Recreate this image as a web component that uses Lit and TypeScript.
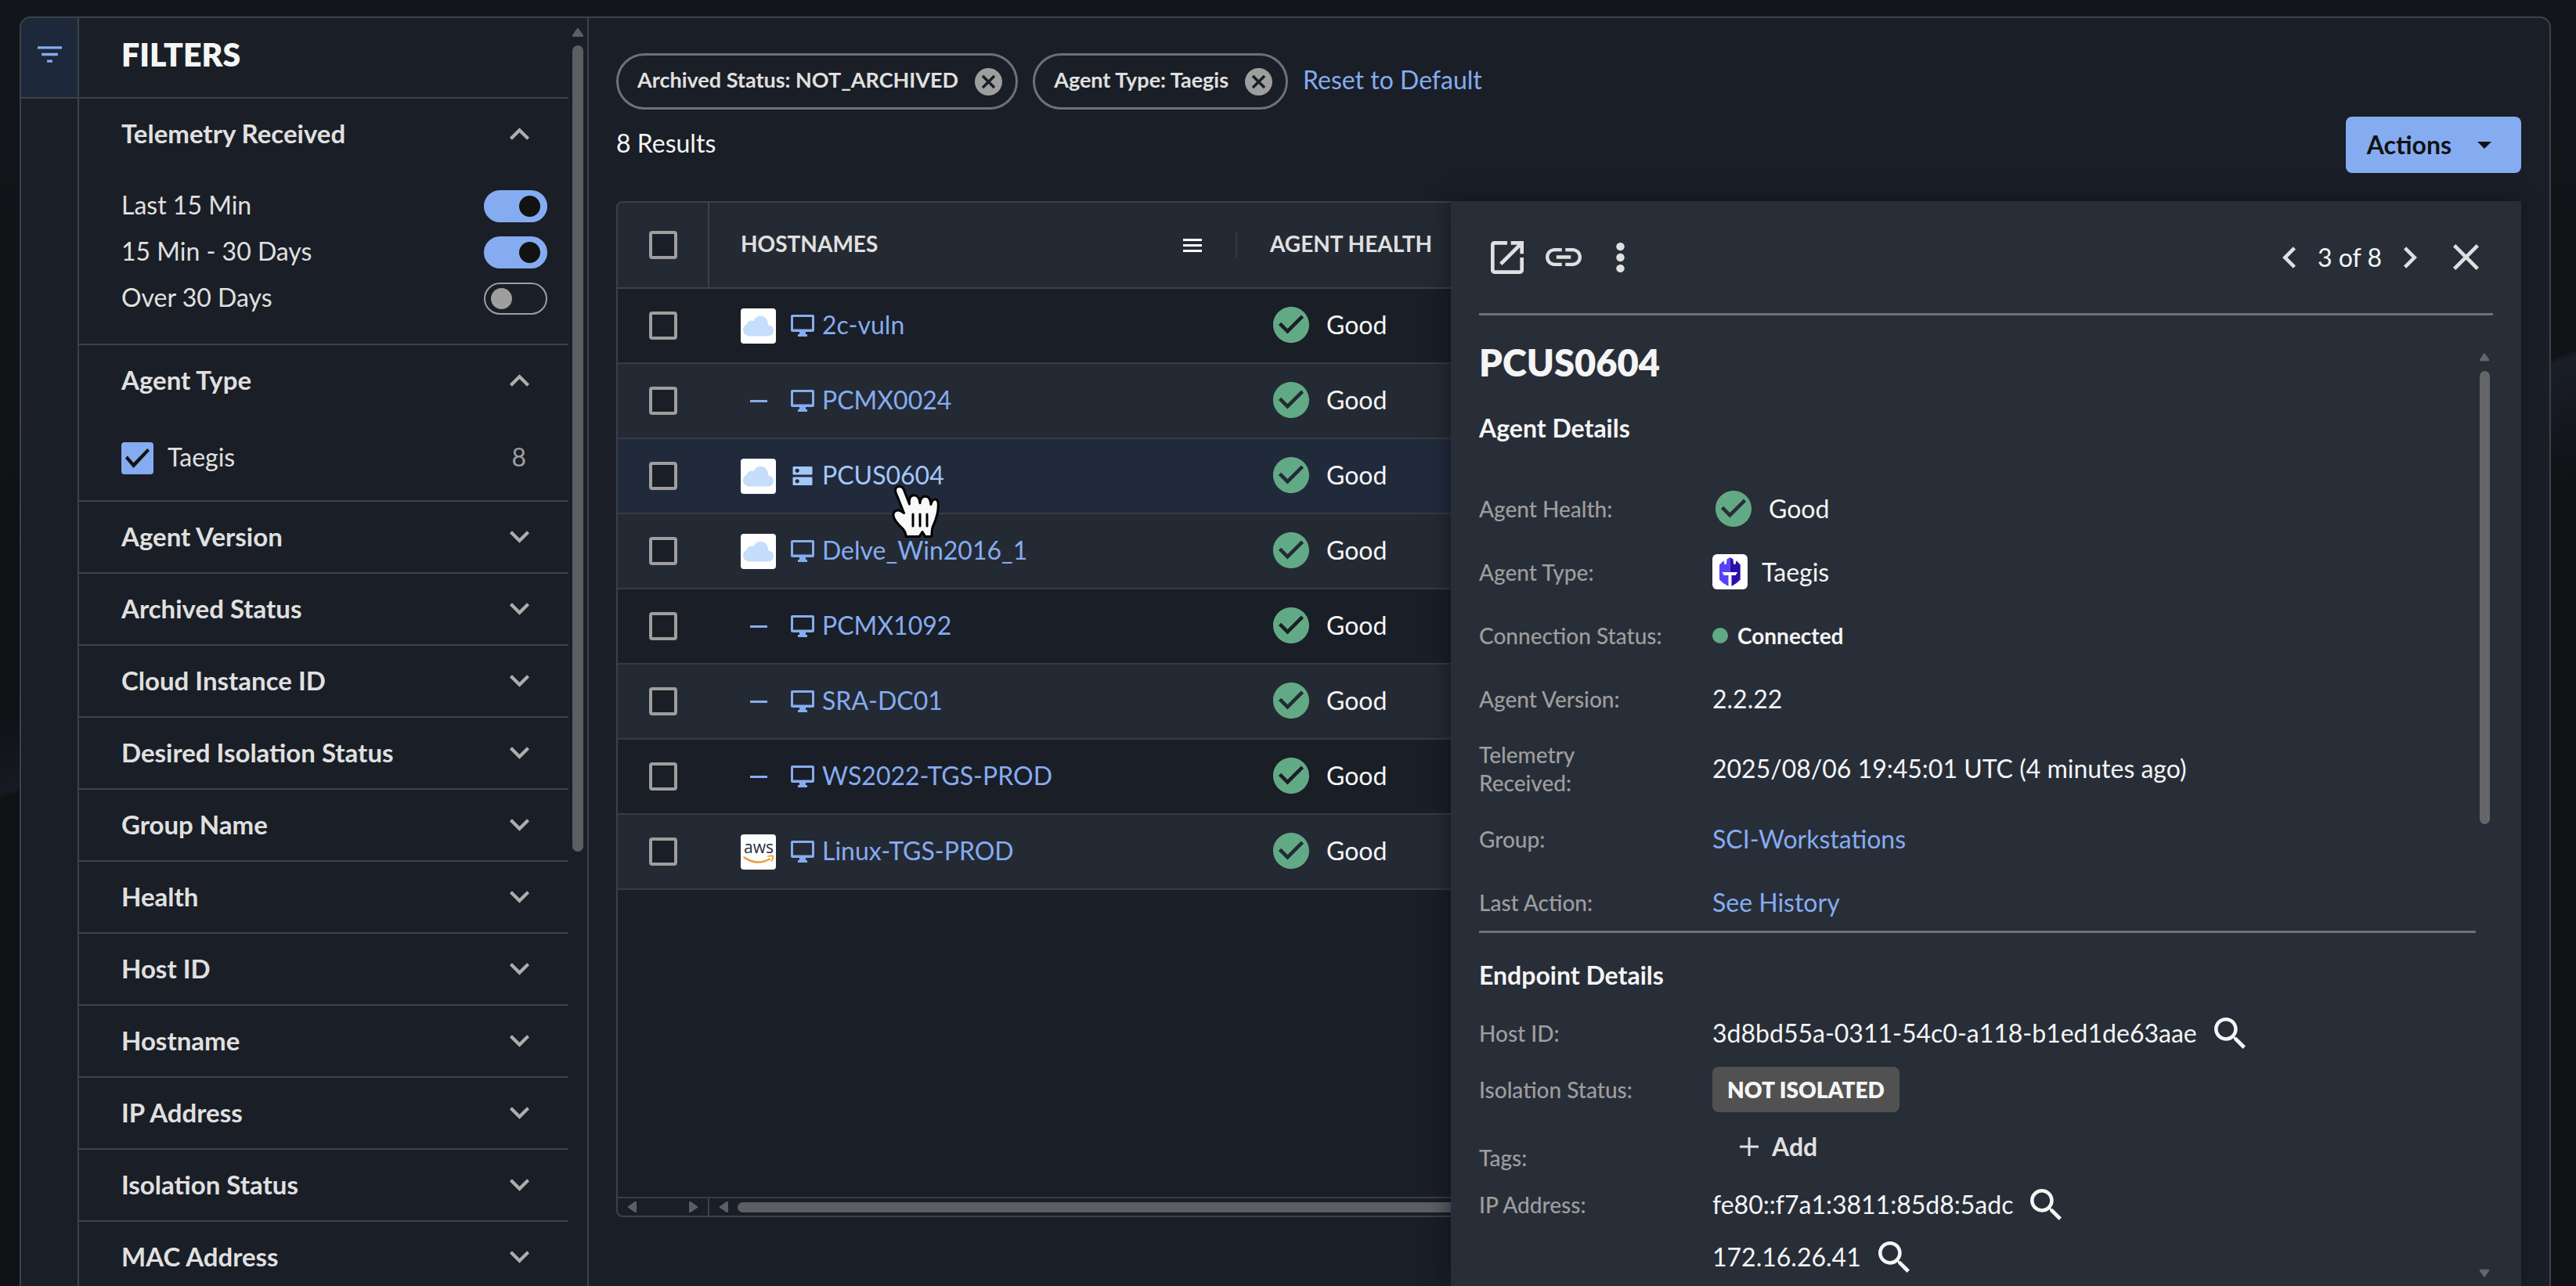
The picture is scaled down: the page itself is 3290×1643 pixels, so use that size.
import { LitElement, html, css, svg, nothing } from "lit";
import { customElement, property } from "lit/decorators.js";
import { classMap } from "lit/directives/class-map.js";

const base = css`
  :host {
    --line: #3c414b;
    --panel: #1a1e26;
    --raised: #242a33;
    --blue: #85acf1;
    --grey: #9e9e9e;
    --text: #e0e0e0;
    --bright: #f5f5f5;
    --green: #62aa85;
    box-sizing: border-box;
    font-family: "Lato", "Liberation Sans", sans-serif;
    font-size: 32px;
    line-height: 40px;
    color: var(--bright);
  }
  *, *::before, *::after { box-sizing: border-box; }
  svg { display: block; flex: none; fill: currentColor; }
  button {
    font: inherit; color: inherit; background: none; border: 0; padding: 0; margin: 0;
    display: flex; align-items: center; cursor: pointer; text-align: left;
  }
  a { color: var(--blue); text-decoration: none; }
  h1, h2, h3, dl, dd, p { margin: 0; }
  input { appearance: none; margin: 0; display: block; flex: none; cursor: pointer; }
`;

const icon = (viewBox: string, w: number, h: number, d: string) =>
  html`<svg viewBox=${viewBox} width=${w} height=${h} aria-hidden="true">${svg`<path d=${d}></path>`}</svg>`;

const chevronDown = () => icon("6 8 12 8.6", 27, 18, "M16.59 8.59 12 13.17 7.41 8.59 6 10l6 6 6-6z");
const chevronUp = () => icon("6 7.4 12 8.6", 27, 18, "M12 8l-6 6 1.41 1.41L12 10.83l4.59 4.58L18 14z");
const filterIcon = () => icon("3 6 18 12", 31, 21, "M10 18h4v-2h-4v2zM3 6v2h18V6H3zm3 7h12v-2H6v2z");
const cancelIcon = () => icon("2 2 20 20", 35, 35, "M12 2C6.47 2 2 6.47 2 12s4.47 10 10 10 10-4.47 10-10S17.53 2 12 2zm5 13.59L15.59 17 12 13.41 8.41 17 7 15.59 10.59 12 7 8.41 8.41 7 12 10.59 15.59 7 17 8.41 13.41 12 17 15.59z");
const goodIcon = () => icon("2 2 20 20", 46, 46, "M12 2C6.48 2 2 6.48 2 12s4.48 10 10 10 10-4.48 10-10S17.52 2 12 2zm-2 15l-5-5 1.41-1.41L10 14.17l7.59-7.59L19 8l-9 9z");
const openIcon = () => icon("3 3 18 18", 42, 42, "M19 19H5V5h7V3H5c-1.11 0-2 .9-2 2v14c0 1.1.89 2 2 2h14c1.1 0 2-.9 2-2v-7h-2v7zM14 3v2h3.59l-9.83 9.83 1.41 1.41L19 6.41V10h2V3h-7z");
const linkIcon = () => icon("2 7 20 10", 46, 23, "M3.9 12c0-1.71 1.39-3.1 3.1-3.1h4V7H7c-2.76 0-5 2.24-5 5s2.24 5 5 5h4v-1.9H7c-1.71 0-3.1-1.39-3.1-3.1zM8 13h8v-2H8v2zm9-6h-4v1.9h4c1.71 0 3.1 1.39 3.1 3.1s-1.39 3.1-3.1 3.1h-4V17h4c2.76 0 5-2.24 5-5s-2.24-5-5-5z");
const dotsIcon = () => icon("9.7 4 4.6 16", 11, 38, "M12 8.3c1.2 0 2.2-1 2.2-2.2S13.200 4 12 4s-2.200.9-2.200 2.100 1 2.200 2.200 2.200zm0 1.500c-1.200 0-2.200 1-2.200 2.200s1 2.200 2.200 2.200 2.200-1 2.200-2.200-1-2.200-2.200-2.200zm0 6c-1.200 0-2.200 1-2.200 2.100s1 2.100 2.200 2.100 2.200-.9 2.200-2.100-1-2.100-2.200-2.100z");
const prevIcon = () => icon("8 6 7.4 12", 17, 28, "M15.410 7.410L14 6l-6 6 6 6 1.410-1.410L10.830 12z");
const nextIcon = () => icon("8.6 6 7.4 12", 17, 28, "M10 6L8.590 7.410 13.170 12l-4.580 4.590L10 18l6-6z");
const closeIcon = () => icon("5 5 14 14", 33, 33, "M19 6.410L17.590 5 12 10.590 6.410 5 5 6.410 10.590 12 5 17.590 6.410 19 12 13.410 17.590 19 19 17.590 13.410 12z");
const searchIcon = () => icon("3 3 17.5 17.5", 40, 40, "M15.500 14h-.790l-.280-.270C15.410 12.590 16 11.110 16 9.500 16 5.910 13.090 3 9.500 3S3 5.910 3 9.500 5.910 16 9.500 16c1.610 0 3.090-.590 4.230-1.570l.270.280v.790l5 4.990L20.490 19l-4.990-5zm-6 0C7.010 14 5 11.990 5 9.500S7.010 5 9.500 5 14 7.010 14 9.500 11.990 14 9.500 14z");
const menuIcon = () => icon("0 0 24 17", 24, 17, "M0 0h24v3H0zM0 7h24v3H0zM0 14h24v3H0z");
const plusIcon = () => icon("0 0 24 24", 24, 24, "M10.500 0h3v10.500H24v3H13.500V24h-3V13.500H0v-3h10.500z");
const caretIcon = () => icon("0 0 18 9", 18, 9, "M0 0h18L9 9z");
const monitorIcon = () => icon("0 0 30 28", 30, 28, "M2 0h26a2 2 0 0 1 2 2v18a2 2 0 0 1-2 2h-9v3h2v3H9v-3h2v-3H2a2 2 0 0 1-2-2V2a2 2 0 0 1 2-2zM3 3v15.500h24V3z");
const serverIcon = () => html`<svg viewBox="0 0 30 28" width="30" height="28" aria-hidden="true">${svg`
  <path fill-rule="evenodd" d="M3.500 2h23a1 1 0 0 1 1 1v8.500a1 1 0 0 1-1 1h-23a1 1 0 0 1-1-1V3a1 1 0 0 1 1-1zM8.200 4.700a2.600 2.600 0 1 0 .01 0zM3.500 15.500h23a1 1 0 0 1 1 1V25a1 1 0 0 1-1 1h-23a1 1 0 0 1-1-1v-8.500a1 1 0 0 1 1-1zM8.200 18.200a2.600 2.600 0 1 0 .01 0z"></path>`}</svg>`;
const arrow = (dir: "up" | "down" | "left" | "right") => {
  const d = {
    up: "M7 1.200a1 1 0 0 1 1.800 0L15 10q.6 2-1 2H2q-1.600 0-1-2z",
    down: "M7 10.800a1 1 0 0 0 1.800 0L15 2q.6-2-1-2H2Q.4 0 1 2z",
    left: "M1.200 6.200a1 1 0 0 0 0 1.800L10 14q2 .6 2-1V1q0-1.600-2-1z",
    right: "M10.800 6.200a1 1 0 0 1 0 1.800L2 14q-2 .6-2-1V1q0-1.600 2-1z",
  }[dir];
  return dir === "up" || dir === "down" ? icon("0 0 16 12", 16, 12, d) : icon("0 0 12 14", 12, 14, d);
};

const cloudTile = () => html`<svg viewBox="0 0 45 45" width="45" height="45" aria-hidden="true">${svg`
  <rect width="45" height="45" rx="4" fill="#ffffff"></rect>
  <path fill="#c5defb" d="M11 35.500C6.500 35.500 3 32 3 27.800 3 24 5 21.500 8 20.300 8.300 17.500 11 15.500 14 15.800c1.200 0 2 .2 2.600.5C18 12.500 21 9.700 25 9.700c6 0 10 4.500 10 10.500 0 .5 0 .8-.1 1.200C39 21.300 42 24.500 42 28.300c0 4.200-3 7.200-7 7.200z"></path>`}</svg>`;
const awsTile = () => html`<svg viewBox="0 0 45 45" width="45" height="45" role="img" aria-label="aws">${svg`
  <rect width="45" height="45" rx="4" fill="#ffffff"></rect>
  <text x="23" y="24" text-anchor="middle" font-family="Open Sans, sans-serif" font-size="21" font-weight="500" fill="#252f3e">aws</text>
  <path fill="none" stroke="#ec9a36" stroke-width="2.400" stroke-linecap="round" d="M4.500 29.500q16 11 32.500 2"></path>
  <path fill="none" stroke="#ec9a36" stroke-width="1.800" stroke-linecap="round" stroke-linejoin="round" d="M35 28q4-1 6.300-.3.300 3-2 6.300"></path>`}</svg>`;
const taegisTile = () => html`<svg viewBox="0 0 45 45" width="45" height="45" aria-hidden="true">${svg`
  <rect width="45" height="45" rx="6" fill="#ffffff"></rect>
  <path fill="#5643f6" d="M22.500 4 18.500 6.500 18 12.500l-2.300.8-1.200-5L9 13.500v19l4.500 4.300 7 4.200V27h-5.700L12.500 23h10z"></path>
  <path fill="#2c0fa9" d="M22.500 4l4 2.500.5 6 2.300.8 1.200-5 5.200 5.200v19l-4.500 4.300-6.700 4.200V27h5.200l2.500-4h-9.700z"></path>`}</svg>`;
const handCursor = () => html`<svg class="cursor" viewBox="0 0 61 68" width="61" height="68" aria-hidden="true">${svg`
  <path fill="#f8f8f8" stroke="#000000" stroke-width="3" stroke-linejoin="round" d="M5 9C3.500 4 6 1.500 9.500 1.500c3 0 5 1.500 6 4.500L22.500 24c-.8-7 1-11 5.500-11.300 5-.2 7 3 8 10C36.500 17 39 14 43 14.300c5 .2 6.500 4 6.800 10.200 1.500-5 3-7 6-6.500 3.200.6 3.700 3.500 3.500 8 0 12-4 20-7 27-1 3-1.300 7-1.500 12.500h-8L39 59.500 35 65.500H18C18 61 17 59 14 55.500 8 50 3 45 2 39c-.8-5 3.500-7.500 7-7 2.500.5 4.500 2 6.500 3.500z"></path>
  <path stroke="#000000" stroke-width="3" stroke-linecap="round" d="M27 37v15M36 37v15M45 37v15"></path>`}</svg>`;

@customElement("filter-sidebar")
export class FilterSidebar extends LitElement {
  static styles = [base, css`
    :host { display: flex; min-height: 0; overflow: hidden; border-right: 2px solid var(--line); }
    .content { flex: 1; min-width: 0; }
    .title {
      height: 103px; padding: 3px 0 0 54px; border-bottom: 2px solid var(--line);
      font-size: 41px; line-height: 88px; font-weight: 800;
    }
    section { border-bottom: 2px solid var(--line); }
    .head {
      width: 100%; height: 90px; padding: 0 49px 3px 54px; justify-content: space-between;
      font-size: 33px; font-weight: 700; color: var(--text);
    }
    .collapsed { border-bottom: 2px solid var(--line); height: 92px; }
    .head svg { color: #aeaeae; margin-top: 3px; }
    .toggles { padding: 18px 27px 28px 54px; }
    .option { display: flex; align-items: center; justify-content: space-between; height: 59px; color: var(--text); }
    label { padding-bottom: 4px; }
    .switch {
      width: 81px; height: 41px; border-radius: 21px; border: 2px solid var(--grey);
      padding: 0 7px; display: flex; align-items: center;
    }
    .switch::before { content: ""; width: 27px; height: 27px; border-radius: 50%; background: var(--grey); }
    .switch:checked { background: var(--blue); border-color: var(--blue); justify-content: flex-end; }
    .switch:checked::before { background: #121212; }
    .types { padding: 24px 54px 23px 54px; }
    .type { display: flex; align-items: center; gap: 18px; height: 61px; color: var(--text); }
    .type input { width: 41px; height: 41px; border-radius: 4px; background: var(--blue); padding: 8px 5px; }
    .type input::before {
      content: ""; display: block; width: 31px; height: 25px; background: #121212;
      clip-path: polygon(0 50%, 9% 37%, 34% 73%, 91% 0, 100% 12%, 34% 100%);
    }
    .count { margin-left: auto; padding-bottom: 4px; color: var(--grey); }
    .scroll { width: 24px; padding: 12px 4px 0; display: flex; flex-direction: column; gap: 11px; align-items: center; color: #5b5e62; }
    .track { flex: 1; width: 14px; }
    .thumb { height: 65%; border-radius: 7px; background: #5b5e62; }
  `];

  private ranges = [["Last 15 Min", true], ["15 Min - 30 Days", true], ["Over 30 Days", false]] as [string, boolean][];
  private groups = ["Agent Version", "Archived Status", "Cloud Instance ID", "Desired Isolation Status", "Group Name",
    "Health", "Host ID", "Hostname", "IP Address", "Isolation Status", "MAC Address"];

  render() {
    return html`
      <div class="content">
        <h2 class="title">FILTERS</h2>
        <section>
          <button class="head" aria-expanded="true">Telemetry Received ${chevronUp()}</button>
          <div class="toggles">
            ${this.ranges.map(([name, on], i) => html`
              <div class="option"><label for="range-${i}">${name}</label>
                <input class="switch" type="checkbox" role="switch" id="range-${i}" .checked=${on}></div>`)}
          </div>
        </section>
        <section>
          <button class="head" aria-expanded="true">Agent Type ${chevronUp()}</button>
          <div class="types">
            <div class="type"><input type="checkbox" id="type-taegis" checked>
              <label for="type-taegis">Taegis</label><span class="count">8</span></div>
          </div>
        </section>
        ${this.groups.map((g) => html`<button class="head collapsed" aria-expanded="false">${g} ${chevronDown()}</button>`)}
      </div>
      <div class="scroll">${arrow("up")}<div class="track"><div class="thumb"></div></div></div>`;
  }
}

type Host = { name: string; tile: "cloud" | "aws" | null; server?: boolean; selected?: boolean };

@customElement("host-table")
export class HostTable extends LitElement {
  static styles = [base, css`
    :host { display: flex; flex-direction: column; border: 2px solid var(--line); border-radius: 8px; overflow: hidden; }
    table { width: 100%; border-collapse: separate; border-spacing: 0; table-layout: fixed; }
    .col-check { width: 117px; }
    .col-host { width: 674px; }
    th { height: 110px; padding: 0 0 0 40px; background: var(--raised); border-bottom: 2px solid var(--line);
      text-align: left; font-size: 28px; font-weight: 700; color: var(--text); }
    th.check { border-right: 2px solid var(--line); }
    td { height: 96px; padding: 0 0 0 40px; border-bottom: 2px solid #393b40; background: var(--panel); }
    td.health, th.health { padding-left: 42px; }
    tr.alt td { background: var(--raised); }
    tr.selected td { background: #212a3b; }
    .th { display: flex; align-items: center; justify-content: space-between; }
    .label { padding-bottom: 4px; }
    .tools { display: flex; align-items: center; gap: 43px; color: #ffffff; }
    .tools::after { content: ""; width: 2px; height: 32px; background: #343a44; }
    input { width: 36px; height: 36px; border: 4px solid var(--grey); border-radius: 4px; background: var(--panel); }
    .host { display: flex; align-items: center; position: relative; }
    .tile { width: 45px; margin-right: 19px; display: flex; justify-content: center; color: var(--blue); }
    .dash { width: 22px; height: 3px; background: var(--blue); }
    .host a { display: flex; align-items: center; gap: 10px; }
    .host a span { padding-bottom: 2px; }
    .selected .host a { color: #a4c7fa; }
    .cursor { position: absolute; left: 193px; top: 34px; z-index: 1; }
    .status { display: flex; align-items: center; gap: 22px; padding: 0 0 2px 4px; }
    .status svg { color: var(--green); }
    .blank { flex: 1; }
    .scroll { display: flex; height: 24px; border-top: 2px solid #3d3c3e; color: #5b5e62; }
    .pinned { width: 117px; border-right: 2px solid var(--line); display: flex; align-items: center; justify-content: space-between; padding: 0 12px; }
    .rest { flex: 1; display: flex; align-items: center; gap: 12px; padding: 0 12px; }
    .thumb { flex: 1; height: 13px; border-radius: 7px; background: #5b5e62; }
  `];

  private hosts: Host[] = [
    { name: "2c-vuln", tile: "cloud" },
    { name: "PCMX0024", tile: null },
    { name: "PCUS0604", tile: "cloud", server: true, selected: true },
    { name: "Delve_Win2016_1", tile: "cloud" },
    { name: "PCMX1092", tile: null },
    { name: "SRA-DC01", tile: null },
    { name: "WS2022-TGS-PROD", tile: null },
    { name: "Linux-TGS-PROD", tile: "aws" },
  ];

  private row(h: Host, i: number) {
    return html`<tr class=${classMap({ alt: i % 2 === 1, selected: !!h.selected })}>
      <td><input type="checkbox" aria-label="Select ${h.name}"></td>
      <td><div class="host">
        <span class="tile">${h.tile === "cloud" ? cloudTile() : h.tile === "aws" ? awsTile() : html`<span class="dash"></span>`}</span>
        <a href="#${h.name}">${h.server ? serverIcon() : monitorIcon()}<span>${h.name}</span></a>
        ${h.selected ? handCursor() : nothing}
      </div></td>
      <td class="health"><div class="status">${goodIcon()}Good</div></td>
    </tr>`;
  }

  render() {
    return html`
      <table>
        <colgroup><col class="col-check"><col class="col-host"><col></colgroup>
        <thead><tr>
          <th class="check"><input type="checkbox" aria-label="Select all"></th>
          <th><div class="th"><span class="label">HOSTNAMES</span><span class="tools"><button aria-label="Column menu">${menuIcon()}</button></span></div></th>
          <th class="health"><div class="label">AGENT HEALTH</div></th>
        </tr></thead>
        <tbody>${this.hosts.map((h, i) => this.row(h, i))}</tbody>
      </table>
      <div class="blank"></div>
      <div class="scroll">
        <div class="pinned">${arrow("left")}${arrow("right")}</div>
        <div class="rest">${arrow("left")}<div class="thumb"></div></div>
      </div>`;
  }
}

@customElement("host-drawer")
export class HostDrawer extends LitElement {
  @property() name = "PCUS0604";

  static styles = [base, css`
    :host { display: flex; flex-direction: column; padding: 0 36px; background: #282e38; box-shadow: -4px 0 24px rgba(10, 14, 20, 0.5); overflow: hidden; }
    header { flex: none; height: 146px; border-bottom: 3px solid #6c717b; display: flex; align-items: center; padding: 0 18px 0 15px; color: var(--text); }
    .left { display: flex; align-items: center; gap: 28px; }
    .left button:last-child { margin-left: 16px; }
    .right { display: flex; align-items: center; margin-left: auto; gap: 28px; }
    .right button:last-child { margin-left: 18px; }
    .right span { color: var(--bright); }
    .body { flex: 1; min-height: 0; display: flex; }
    .details { flex: 1; min-width: 0; overflow: hidden; }
    h1 { margin-top: 32px; font-size: 47px; line-height: 56px; font-weight: 800; }
    h2 { font-size: 32px; font-weight: 700; }
    .agent-title { margin-top: 36px; }
    .agent { margin-top: 46px; display: grid; gap: 8px; }
    .row { display: grid; grid-template-columns: 242px 1fr; column-gap: 56px; align-items: center; min-height: 73px; }
    .agent .row { padding: 9px 0; }
    dt { font-size: 28px; line-height: 36px; color: var(--grey); font-weight: 500; }
    dd { display: flex; align-items: center; gap: 22px; }
    .good { padding-left: 4px; }
    .good svg { color: var(--green); }
    .type { gap: 18px; }
    .connected { gap: 12px; font-size: 28px; font-weight: 700; }
    .dot { width: 20px; height: 20px; border-radius: 50%; background: var(--green); }
    hr { border: 0; height: 3px; background: #6c717b; margin: 0 0 34px; }
    .endpoint { margin-top: 18px; }
    .endpoint .row { min-height: 72px; }
    .badge { padding: 9px 19px; border-radius: 8px; background: #515151; font-size: 28px; font-weight: 800; }
    .endpoint .tags { min-height: 77px; padding: 4px 0 8px; }
    .tags dt { align-self: end; }
    .tags button { gap: 17px; padding: 0 35px; font-weight: 700; color: var(--text); }
    .ips { align-items: start; }
    .ips dt { padding: 16px 0; }
    .ips dd { height: 67px; }
    .scroll { width: 22px; padding: 47px 4px 10px; display: flex; flex-direction: column; gap: 12px; align-items: center; color: #64666a; }
    .scroll svg { width: 14px; }
    .track { flex: 1; width: 13px; }
    .thumb { height: 51%; border-radius: 7px; background: #64666a; }
  `];

  private row(label: string, value: unknown, cls = "") {
    return html`<dl class="row"><dt>${label}</dt><dd class=${cls}>${value}</dd></dl>`;
  }

  private search(label: string) {
    return html`<button aria-label="Search ${label}">${searchIcon()}</button>`;
  }

  render() {
    return html`
      <header>
        <div class="left">
          <button aria-label="Open in new tab">${openIcon()}</button>
          <button aria-label="Copy link">${linkIcon()}</button>
          <button aria-label="More">${dotsIcon()}</button>
        </div>
        <div class="right">
          <button aria-label="Previous">${prevIcon()}</button>
          <span>3 of 8</span>
          <button aria-label="Next">${nextIcon()}</button>
          <button aria-label="Close">${closeIcon()}</button>
        </div>
      </header>
      <div class="body">
        <div class="details">
          <h1>${this.name}</h1>
          <h2 class="agent-title">Agent Details</h2>
          <div class="agent">
            ${this.row("Agent Health:", html`${goodIcon()}Good`, "good")}
            ${this.row("Agent Type:", html`${taegisTile()}Taegis`, "type")}
            ${this.row("Connection Status:", html`<span class="dot"></span>Connected`, "connected")}
            ${this.row("Agent Version:", "2.2.22")}
            ${this.row("Telemetry Received:", "2025/08/06 19:45:01 UTC (4 minutes ago)")}
            ${this.row("Group:", html`<a href="#group">SCI-Workstations</a>`)}
            ${this.row("Last Action:", html`<a href="#history">See History</a>`)}
          </div>
          <hr>
          <h2>Endpoint Details</h2>
          <div class="endpoint">
            ${this.row("Host ID:", html`3d8bd55a-0311-54c0-a118-b1ed1de63aae${this.search("host ID")}`)}
            ${this.row("Isolation Status:", html`<span class="badge">NOT ISOLATED</span>`)}
            <dl class="row tags"><dt>Tags:</dt><dd><button>${plusIcon()}Add</button></dd></dl>
            <dl class="row ips"><dt>IP Address:</dt><div>
              <dd>fe80::f7a1:3811:85d8:5adc${this.search("IPv6 address")}</dd>
              <dd>172.16.26.41${this.search("IPv4 address")}</dd>
            </div></dl>
          </div>
        </div>
        <div class="scroll">${arrow("up")}<div class="track"><div class="thumb"></div></div>${arrow("down")}</div>
      </div>`;
  }
}

@customElement("app-root")
export class AppRoot extends LitElement {
  static styles = [base, css`
    :host {
      display: flex; height: 100vh; padding: 21px 32px 0 25px; overflow: hidden;
      background:
        linear-gradient(160deg, transparent 18%, #1a1e27 22%, transparent 90%) right 420px / 32px 200px no-repeat,
        linear-gradient(160deg, transparent 20%, #161a22 84%, transparent 88%) left 890px / 25px 140px no-repeat,
        linear-gradient(#121519, #101216 40%, #0f1115);
    }
    .panel {
      flex: 1; min-width: 0; display: grid; grid-template-columns: 74px 651px 1fr; grid-template-rows: 100%;
      border: 2px solid var(--line); border-bottom: 0; border-radius: 14px 14px 0 0; background: var(--panel); overflow: hidden;
    }
    .rail { border-right: 2px solid var(--line); }
    .rail button {
      width: 100%; height: 103px; justify-content: center; align-items: flex-start; padding-top: 36px;
      background: #1d283a; border-bottom: 2px solid var(--line); color: var(--blue);
    }
    main { display: flex; flex-direction: column; min-width: 0; padding: 45px 36px 0 35px; }
    .chips { display: flex; align-items: center; gap: 19px; }
    .chip {
      display: flex; align-items: center; gap: 21px; height: 72px; padding: 0 17px 0 24px;
      border: 3px solid #6c717d; border-radius: 36px; font-size: 27px; font-weight: 700; color: var(--text);
    }
    .chip button { color: var(--grey); }
    .chip span, .chips a, .bar p { padding-bottom: 4px; }
    .bar { display: flex; align-items: center; justify-content: space-between; height: 72px; margin: 9px 0 36px; }
    .actions {
      height: 72px; padding: 0 38px 0 27px; gap: 33px; border-radius: 8px; background: var(--blue); color: #121212; font-weight: 700;
    }
    .area { flex: 1; min-height: 0; position: relative; display: flex; padding-bottom: 88px; }
    host-table { flex: 1; min-width: 0; }
    host-drawer { position: absolute; top: 0; right: 0; bottom: 0; width: 1367px; max-width: 100%; }
  `];

  render() {
    return html`
      <div class="panel">
        <nav class="rail"><button aria-label="Filters">${filterIcon()}</button></nav>
        <filter-sidebar></filter-sidebar>
        <main>
          <div class="chips">
            <div class="chip"><span>Archived Status: NOT_ARCHIVED</span><button aria-label="Remove archived status filter">${cancelIcon()}</button></div>
            <div class="chip"><span>Agent Type: Taegis</span><button aria-label="Remove agent type filter">${cancelIcon()}</button></div>
            <a href="#reset">Reset to Default</a>
          </div>
          <div class="bar"><p>8 Results</p><button class="actions">Actions${caretIcon()}</button></div>
          <div class="area">
            <host-table></host-table>
            <host-drawer></host-drawer>
          </div>
        </main>
      </div>`;
  }
}
